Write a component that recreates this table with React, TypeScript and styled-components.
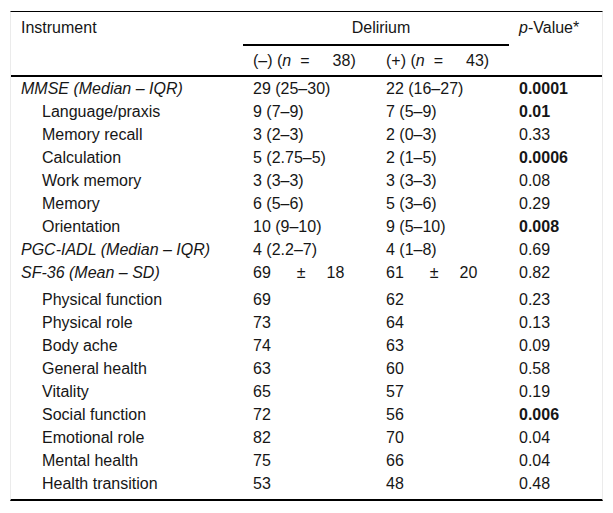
import React from 'react'
import styled, { createGlobalStyle } from 'styled-components'

/**
 * Data
 */
interface Row {
    label: string
    minus: React.ReactNode
    plus: React.ReactNode
    p: string
    strong?: boolean
    group?: boolean
    tall?: boolean
}

const PlusMinus: React.FC<{ a: string; b: string }> = ({ a, b }) => (
    <>
        {a}
        <Gap $w={26}>±</Gap>
        <Gap $w={21}>{b}</Gap>
    </>
)

const rows: Row[] = [
    { label: 'MMSE (Median – IQR)', minus: '29 (25–30)', plus: '22 (16–27)', p: '0.0001', strong: true, group: true },
    { label: 'Language/praxis', minus: '9 (7–9)', plus: '7 (5–9)', p: '0.01', strong: true },
    { label: 'Memory recall', minus: '3 (2–3)', plus: '2 (0–3)', p: '0.33' },
    { label: 'Calculation', minus: '5 (2.75–5)', plus: '2 (1–5)', p: '0.0006', strong: true },
    { label: 'Work memory', minus: '3 (3–3)', plus: '3 (3–3)', p: '0.08' },
    { label: 'Memory', minus: '6 (5–6)', plus: '5 (3–6)', p: '0.29' },
    { label: 'Orientation', minus: '10 (9–10)', plus: '9 (5–10)', p: '0.008', strong: true },
    { label: 'PGC-IADL (Median – IQR)', minus: '4 (2.2–7)', plus: '4 (1–8)', p: '0.69', group: true },
    {
        label: 'SF-36 (Mean – SD)',
        minus: <PlusMinus a="69" b="18" />,
        plus: <PlusMinus a="61" b="20" />,
        p: '0.82',
        group: true,
        tall: true,
    },
    { label: 'Physical function', minus: '69', plus: '62', p: '0.23' },
    { label: 'Physical role', minus: '73', plus: '64', p: '0.13' },
    { label: 'Body ache', minus: '74', plus: '63', p: '0.09' },
    { label: 'General health', minus: '63', plus: '60', p: '0.58' },
    { label: 'Vitality', minus: '65', plus: '57', p: '0.19' },
    { label: 'Social function', minus: '72', plus: '56', p: '0.006', strong: true },
    { label: 'Emotional role', minus: '82', plus: '70', p: '0.04' },
    { label: 'Mental health', minus: '75', plus: '66', p: '0.04' },
    { label: 'Health transition', minus: '53', plus: '48', p: '0.48' },
]

/**
 * Styles
 */
const GlobalStyle = createGlobalStyle`
    body {
        margin: 0;
        background: #ffffff;
        font-family: "Liberation Sans", Arial, sans-serif;
        color: #161616;
    }
`

const Frame = styled.div`
    width: 591px;
    margin: 11px 0 0 10px;
    border-top: 1px solid #000;
    border-bottom: 2px solid #000;
    border-left: 1px solid #ebebeb;
    border-right: 1px solid #ebebeb;
`

const Table = styled.table`
    width: 100%;
    border-collapse: separate;
    border-spacing: 0;
    table-layout: fixed;
    font-size: 16px;
`

const Head = styled.th<{ $center?: boolean; $rule?: boolean; $bottom?: boolean }>`
    font-weight: normal;
    text-align: ${(p) => (p.$center ? 'center' : 'left')};
    vertical-align: top;
    line-height: 18px;
    padding: ${(p) => (p.$bottom ? 6 : 7)}px 0 ${(p) => (p.$bottom ? 5 : 7)}px 10px;
    border-bottom: ${(p) => (p.$rule ? '2px solid #000' : 'none')};
    white-space: nowrap;
`

const Cell = styled.td<{ $indent?: boolean; $italic?: boolean; $bold?: boolean; $tall?: boolean; $last?: boolean }>`
    line-height: 19px;
    vertical-align: top;
    padding: 2px 0 ${(p) => (p.$tall ? 6 : p.$last ? 6 : 2)}px ${(p) => (p.$indent ? 31 : 10)}px;
    font-style: ${(p) => (p.$italic ? 'italic' : 'normal')};
    font-weight: ${(p) => (p.$bold ? 'bold' : 'normal')};
    white-space: nowrap;
`

const Gap = styled.span<{ $w: number }>`
    margin-left: ${(p) => p.$w}px;
`

/**
 * Component
 */
const Count: React.FC<{ sign: string; n: string }> = ({ sign, n }) => (
    <>
        ({sign}) (<i>n</i>
        <Gap $w={9}>=</Gap>
        <Gap $w={23}>{n})</Gap>
    </>
)

const App: React.FC = () => (
    <>
        <GlobalStyle />
        <Frame>
            <Table>
                <colgroup>
                    <col style={{ width: 232 }} />
                    <col style={{ width: 133 }} />
                    <col style={{ width: 133 }} />
                    <col />
                </colgroup>
                <thead>
                    <tr>
                        <Head rowSpan={2} $rule>
                            Instrument
                        </Head>
                        <Head colSpan={2} $center $rule>
                            Delirium
                        </Head>
                        <Head rowSpan={2} $rule>
                            <i>p</i>-Value*
                        </Head>
                    </tr>
                    <tr>
                        <Head $rule $bottom>
                            <Count sign="–" n="38" />
                        </Head>
                        <Head $rule $bottom>
                            <Count sign="+" n="43" />
                        </Head>
                    </tr>
                </thead>
                <tbody>
                    {rows.map((r, i) => {
                        const last = i === rows.length - 1
                        return (
                            <tr key={r.label}>
                                <Cell $indent={!r.group} $italic={r.group} $tall={r.tall} $last={last}>
                                    {r.label}
                                </Cell>
                                <Cell $tall={r.tall} $last={last}>{r.minus}</Cell>
                                <Cell $tall={r.tall} $last={last}>{r.plus}</Cell>
                                <Cell $bold={r.strong} $tall={r.tall} $last={last}>
                                    {r.p}
                                </Cell>
                            </tr>
                        )
                    })}
                </tbody>
            </Table>
        </Frame>
    </>
)

export default App
